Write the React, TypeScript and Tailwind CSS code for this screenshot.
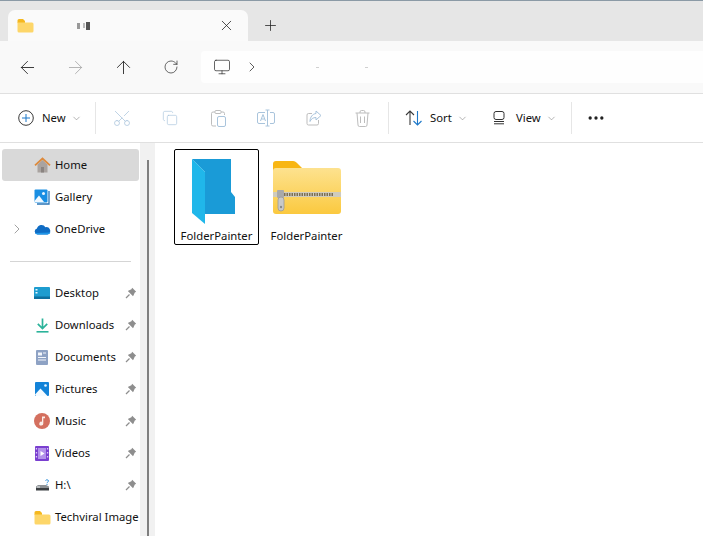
import { ArrowLeft, ArrowRight, ArrowUp, ChevronDown, ChevronRight, Copy, Monitor, MoreHorizontal, Plus, RotateCw, Scissors, X } from 'lucide-react';
import type { ReactNode } from 'react';

function SmallFolder({ size = 17 }: { size?: number }) {
  return (
    <svg width={size} height={size} viewBox="0 0 17 17">
      <path d="M0.5 3.5a1.5 1.5 0 0 1 1.5-1.5h4l2 2v2h-7.500z" fill="#f5b81f" />
      <path d="M0.500 5.500h14.500a1.500 1.500 0 0 1 1.500 1.500v7a1.500 1.500 0 0 1-1.500 1.500h-13a1.500 1.500 0 0 1-1.500-1.500z" fill="#fdd669" />
    </svg>
  );
}

function HomeIcon() {
  return (
    <svg width="17" height="16" viewBox="0 0 17 16">
      <path d="M3.500 7.500 8.500 3l5 4.500V15.500H3.500z" fill="#a9a3a0" />
      <rect x="7" y="10" width="3" height="5.500" fill="#8a8481" />
      <path d="M1 8.300 8.500 1.500 16 8.300" fill="none" stroke="#dd8a3c" strokeWidth="1.800" />
    </svg>
  );
}

function GalleryIcon() {
  return (
    <svg width="16" height="16" viewBox="0 0 16 16">
      <rect x="0.500" y="0.500" width="13" height="13" rx="1" fill="#1a8fe3" />
      <circle cx="9.500" cy="4.500" r="1.500" fill="#e8f5ff" />
      <path d="M0.500 12 5 6.500l5 6.500H0.500z" fill="#f2f9ff" />
      <path d="M15 2v13H3" fill="none" stroke="#2a74b5" strokeWidth="1.300" />
    </svg>
  );
}

function CloudIcon() {
  return (
    <svg width="17" height="12" viewBox="0 0 17 12">
      <path d="M3.500 11.500A3 3 0 0 1 3 5.600 4.500 4.500 0 0 1 11.400 4.300 3.700 3.700 0 0 1 13.500 11.500z" fill="#0f6cc4" />
      <path d="M1 10a3 3 0 0 0 2.500 1.500h10a3.500 3.500 0 0 0 3-2z" fill="#1f96e8" />
    </svg>
  );
}

function DesktopIcon() {
  return (
    <svg width="16" height="12" viewBox="0 0 16 12">
      <rect width="16" height="12" rx="1" fill="#1d9ccf" />
      <rect y="9.500" width="16" height="2.500" fill="#0d6f9e" />
      <rect x="1.500" y="2" width="2" height="1.500" fill="#e8f8ff" />
      <rect x="1.500" y="5" width="2" height="1.500" fill="#e8f8ff" />
    </svg>
  );
}

function DownloadIcon() {
  return (
    <svg width="13" height="15" viewBox="0 0 13 15">
      <path d="M6.500 0.500V10M1.800 5.800 6.500 10.500l4.700-4.700" fill="none" stroke="#2bb39a" strokeWidth="1.700" />
      <rect x="0.500" y="13" width="12" height="1.600" fill="#2bb39a" />
    </svg>
  );
}

function DocumentIcon() {
  return (
    <svg width="12" height="15" viewBox="0 0 12 15">
      <rect width="12" height="15" rx="1" fill="#8ea2c4" />
      <rect x="2" y="2.500" width="4" height="3" fill="#f3f6fb" />
      <rect x="2" y="7" width="8" height="1" fill="#f3f6fb" />
      <rect x="2" y="9.500" width="8" height="1" fill="#f3f6fb" />
      <rect x="7" y="2.500" width="3" height="1" fill="#f3f6fb" />
    </svg>
  );
}

function PicturesIcon() {
  return (
    <svg width="14" height="14" viewBox="0 0 14 14">
      <rect width="14" height="14" rx="1" fill="#1383d8" />
      <circle cx="10.500" cy="3.500" r="1.300" fill="#eaf6ff" />
      <path d="M0 12.500 5.500 6.500 12.500 14H1z" fill="#f5fbff" />
    </svg>
  );
}

function MusicIcon() {
  return (
    <svg width="16" height="16" viewBox="0 0 16 16">
      <circle cx="8" cy="8" r="8" fill="#d4705f" />
      <path d="M8 3.500h3v1.800H9.300V10.500A2 2 0 1 1 8 8.700z" fill="#fbeee9" />
    </svg>
  );
}

function VideosIcon() {
  return (
    <svg width="14" height="15" viewBox="0 0 14 15">
      <rect width="14" height="15" rx="1" fill="#7a3fd0" />
      <rect x="3" y="2" width="8" height="11" fill="#b392ea" />
      <path d="M5.500 5l4 2.500-4 2.500z" fill="#fff" />
      <g fill="#dccbf5">
        <rect x="0.800" y="2" width="1.300" height="1.500" />
        <rect x="0.800" y="6" width="1.300" height="1.500" />
        <rect x="0.800" y="10" width="1.300" height="1.500" />
        <rect x="11.900" y="2" width="1.300" height="1.500" />
        <rect x="11.900" y="6" width="1.300" height="1.500" />
        <rect x="11.900" y="10" width="1.300" height="1.500" />
      </g>
    </svg>
  );
}

function DriveIcon() {
  return (
    <svg width="15" height="12" viewBox="0 0 15 12">
      <path d="M1 7.500 3 6h8l3 1.500v3H1z" fill="#8d9296" />
      <rect x="1" y="9" width="13" height="2.500" fill="#3b3f42" />
      <rect x="2" y="7.500" width="3" height="1" fill="#e8e8e8" />
      <path d="M10.500 1.500c.5-1 3-1 3 .5 0 1-1.500 1-1.500 2.200" fill="none" stroke="#2f8fd8" strokeWidth="1" />
      <rect x="11.500" y="5" width="1" height="1" fill="#2f8fd8" />
    </svg>
  );
}

function PinIcon() {
  return (
    <svg width="12" height="12" viewBox="0 0 12 12">
      <path d="M7.200 0.800 11.200 4.800 9.800 5.600 8.600 8.200 8 9.200 2.800 4 3.800 3.400 6.400 2.200z" fill="#8e8e8e" />
      <path d="M4.500 7.500 1 11" stroke="#8e8e8e" strokeWidth="1.200" />
    </svg>
  );
}

function BlueFolder() {
  return (
    <svg width="48" height="68" viewBox="0 0 48 68">
      <path d="M2 1h39v33l4 5v17H15V14z" fill="#1a9bd7" />
      <path d="M2 1l13 13v52L2 55z" fill="#20b7ea" />
    </svg>
  );
}

function ZipFolder() {
  return (
    <svg width="70" height="56" viewBox="0 0 70 56">
      <defs>
        <linearGradient id="zipBody" x1="0" y1="0" x2="0" y2="1">
          <stop offset="0" stopColor="#fde28f" />
          <stop offset="1" stopColor="#fbc93f" />
        </linearGradient>
      </defs>
      <path d="M1 4a3 3 0 0 1 3-3h17c2 0 3 1 4.500 2.500L30 8v6H1z" fill="#f8b613" />
      <rect x="1" y="8" width="68" height="46" rx="3" fill="url(#zipBody)" />
      <rect x="1" y="32" width="68" height="5" fill="#cfcbbd" />
      <path d="M12 34.500h50" stroke="#7d6f52" strokeWidth="3" strokeDasharray="1.500 1" />
      <rect x="5" y="30" width="7" height="8" rx="1" fill="#a9a9a9" />
      <rect x="6" y="37" width="6" height="14" rx="3" fill="#c9c9c9" stroke="#9a9a9a" strokeWidth="0.800" />
      <circle cx="9" cy="47" r="1.200" fill="#8a8a8a" />
    </svg>
  );
}

function NavButton({ children }: { children: ReactNode }) {
  return <div className="flex h-8 w-12 items-center justify-center">{children}</div>;
}

function ToolIcon({ children }: { children: ReactNode }) {
  return <div className="flex h-8 w-12 items-center justify-center text-[#a9c4dc]">{children}</div>;
}

function Divider() {
  return <div className="h-[32px] w-px bg-[#e6e6e6]" />;
}

function RenameIcon() {
  return (
    <svg width="18" height="18" viewBox="0 0 18 18" fill="none" stroke="#a9c4dc" strokeWidth="1">
      <path d="M8 3.500H2a1.500 1.500 0 0 0-1.500 1.500v8A1.500 1.500 0 0 0 2 14.500h6M13 3.500h3A1.500 1.500 0 0 1 17.500 5v8a1.500 1.500 0 0 1-1.500 1.500h-3" />
      <path d="M10.500 1v16M8.500 1h4M8.500 17h4" />
      <path d="M3.500 12l2.500-6.500L8.500 12M4.500 10h3" />
    </svg>
  );
}

function PasteIcon() {
  return (
    <svg width="15" height="17" viewBox="0 0 15 17" fill="none" strokeWidth="1">
      <path d="M4 2H2A1.500 1.500 0 0 0 0.500 3.500v11A1.500 1.500 0 0 0 2 16h3M10 2h2a1.500 1.500 0 0 1 1.500 1.500V5" stroke="#bdbdbd" />
      <rect x="4" y="0.500" width="6" height="3" rx="1" stroke="#bdbdbd" />
      <rect x="6.500" y="6.500" width="8" height="10" rx="1.500" stroke="#a9c4dc" />
    </svg>
  );
}

function ShareIcon() {
  return (
    <svg width="16" height="16" viewBox="0 0 16 16" fill="none" stroke="#a9c4dc" strokeWidth="1">
      <path d="M12.500 10v3.500A1.500 1.500 0 0 1 11 15H2.500A1.500 1.500 0 0 1 1 13.500V5A1.500 1.500 0 0 1 2.500 3.500H6" stroke="#bdbdbd" />
      <path d="M10 1l5 4.500L10 10V7.500C7 7.500 5 9 4 11.500 4 7 6.500 4 10 3.500z" />
    </svg>
  );
}

function TrashIcon() {
  return (
    <svg width="15" height="17" viewBox="0 0 15 17" fill="none" stroke="#bdbdbd" strokeWidth="1">
      <path d="M0.500 3h14M5 3V2a1.500 1.500 0 0 1 1.500-1.500h2A1.500 1.500 0 0 1 10 2v1" />
      <path d="M2 3l1 12a1.500 1.500 0 0 0 1.500 1.500h6A1.500 1.500 0 0 0 12 15l1-12" />
      <path d="M5.500 6.500v6.500M9.500 6.500v6.500" />
    </svg>
  );
}

function SortIcon() {
  return (
    <svg width="18" height="16" viewBox="0 0 18 16" fill="none" strokeWidth="1.100">
      <path d="M5 15V1M1 5l4-4 4 4" stroke="#3a3a3a" />
      <path d="M12.500 1v14M8.500 11l4 4 4-4" stroke="#1d78c9" />
    </svg>
  );
}

function ViewIcon() {
  return (
    <svg width="12" height="14" viewBox="0 0 12 14" fill="none" stroke="#333" strokeWidth="1">
      <rect x="1" y="0.500" width="10" height="8" rx="2" />
      <path d="M1 10.500h10M1 12.800h10" />
    </svg>
  );
}

const mainItems = [
  { label: 'Home', icon: <HomeIcon />, active: true },
  { label: 'Gallery', icon: <GalleryIcon /> },
  { label: 'OneDrive', icon: <CloudIcon />, expand: true },
];

const quickItems = [
  { label: 'Desktop', icon: <DesktopIcon />, pin: true },
  { label: 'Downloads', icon: <DownloadIcon />, pin: true },
  { label: 'Documents', icon: <DocumentIcon />, pin: true },
  { label: 'Pictures', icon: <PicturesIcon />, pin: true },
  { label: 'Music', icon: <MusicIcon />, pin: true },
  { label: 'Videos', icon: <VideosIcon />, pin: true },
  { label: 'H:\\', icon: <DriveIcon />, pin: true },
  { label: 'Techviral Image', icon: <SmallFolder /> },
];

type NavItem = {
  label: string;
  icon: ReactNode;
  active?: boolean;
  expand?: boolean;
  pin?: boolean;
};

function SidebarRow({ item }: { item: NavItem }) {
  return (
    <div className={`ml-[2px] flex h-8 w-[137px] shrink-0 items-center overflow-hidden rounded-[3px] ${item.active ? 'bg-[#d9d9d9]' : ''}`}>
      <div className="flex w-[30px] shrink-0 items-center justify-center text-[#8a8a8a]">
        {item.expand && <ChevronRight size={16} strokeWidth={1.2} />}
      </div>
      <div className="flex w-[20px] shrink-0 items-center justify-center">{item.icon}</div>
      <span className="ml-[3px] whitespace-nowrap text-[11.3px] text-[#111]">{item.label}</span>
      {item.pin && (
        <div className="ml-auto mr-[2px] flex w-[12px] shrink-0 items-center justify-center">
          <PinIcon />
        </div>
      )}
    </div>
  );
}

export default function App() {
  return (
    <div className="flex h-[536px] w-[703px] flex-col overflow-hidden bg-white font-['Noto_Sans',sans-serif]">
      <div className="flex h-[41px] shrink-0 items-end border-t border-[#8b9aa6] bg-[#e6e6e6] pl-[8px]">
        <div className="flex h-[31px] w-[240px] items-center rounded-t-[7px] bg-[#fafafa] pl-[9px] pr-[13px]">
          <SmallFolder />
          <span className="ml-[43px] h-[6px] w-[3px] bg-[#999]" />
          <span className="ml-[3px] h-[5px] w-[2px] bg-[#bbb]" />
          <span className="ml-[1px] h-[8px] w-[4px] bg-[#555]" />
          <X size={17} strokeWidth={1.1} className="ml-auto text-[#222]" />
        </div>
        <div className="mb-[7px] ml-[14px] flex h-[17px] w-[17px] items-center justify-center">
          <Plus size={17} strokeWidth={1.1} className="text-[#222]" />
        </div>
      </div>
      <div className="flex h-[53px] shrink-0 items-center border-b border-[#e0e0e0] bg-[#f9f9f9] pl-[3px]">
        <NavButton><ArrowLeft size={21} strokeWidth={1} className="text-[#222]" /></NavButton>
        <NavButton><ArrowRight size={21} strokeWidth={1} className="text-[#aaa]" /></NavButton>
        <NavButton><ArrowUp size={21} strokeWidth={1} className="text-[#222]" /></NavButton>
        <NavButton><RotateCw size={16} strokeWidth={1.1} className="text-[#333]" /></NavButton>
        <div className="ml-[6px] flex h-[32px] flex-1 items-center rounded-l-[4px] bg-[#fefefe] pl-[12px]">
          <Monitor size={18} strokeWidth={1} className="text-[#333]" />
          <ChevronRight size={16} strokeWidth={1.2} className="ml-[13px] text-[#333]" />
          <span className="ml-[56px] h-px w-[3px] bg-[#d0d0d0]" />
          <span className="ml-[46px] h-px w-[3px] bg-[#d0d0d0]" />
        </div>
      </div>
      <div className="flex h-[49px] shrink-0 items-center border-b border-[#e0e0e0] bg-white">
        <div className="flex w-[95px] items-center pl-[18px]">
          <svg width="16" height="16" viewBox="0 0 16 16" fill="none">
            <circle cx="8" cy="8" r="7.300" stroke="#3a3a3a" strokeWidth="1" />
            <path d="M8 4v8M4 8h8" stroke="#1d78c9" strokeWidth="1" />
          </svg>
          <span className="ml-[8px] text-[11.3px] text-[#111]">New</span>
          <ChevronDown size={11} strokeWidth={1.2} className="ml-[5px] text-[#777]" />
        </div>
        <Divider />
        <div className="ml-[2px] flex">
          <ToolIcon><Scissors size={20} strokeWidth={0.9} className="-rotate-90" /></ToolIcon>
          <ToolIcon><Copy size={16} strokeWidth={1} /></ToolIcon>
          <ToolIcon><PasteIcon /></ToolIcon>
          <ToolIcon><RenameIcon /></ToolIcon>
          <ToolIcon><ShareIcon /></ToolIcon>
          <ToolIcon><TrashIcon /></ToolIcon>
        </div>
        <div className="ml-[2px]"><Divider /></div>
        <div className="flex w-[87px] items-center pl-[16px]">
          <SortIcon />
          <span className="ml-[7px] text-[11.3px] text-[#111]">Sort</span>
          <ChevronDown size={11} strokeWidth={1.2} className="ml-[5px] text-[#777]" />
        </div>
        <div className="flex w-[95px] items-center pl-[17px]">
          <ViewIcon />
          <span className="ml-[11px] text-[11.3px] text-[#111]">View</span>
          <ChevronDown size={11} strokeWidth={1.2} className="ml-[5px] text-[#777]" />
        </div>
        <Divider />
        <MoreHorizontal size={20} strokeWidth={2} className="ml-[14px] text-[#222]" />
      </div>
      <div className="flex min-h-0 flex-1">
        <div className="flex w-[140px] shrink-0 flex-col overflow-hidden bg-white pt-[6px]">
          {mainItems.map((item) => (
            <SidebarRow key={item.label} item={item} />
          ))}
          <div className="flex h-8 shrink-0 items-center pl-[10px]">
            <div className="h-px w-[121px] bg-[#d5d5d5]" />
          </div>
          {quickItems.map((item) => (
            <SidebarRow key={item.label} item={item} />
          ))}
        </div>
        <div className="w-[15px] shrink-0 bg-[#f1f1f1] pl-[7px] pt-[17px]">
          <div className="h-full w-[2px] bg-[#7f7f7f]" />
        </div>
        <div className="flex flex-1 items-start gap-[5px] pl-[19px] pt-[6px]">
          <div className="flex h-[96px] w-[85px] flex-col items-center rounded-[2px] border border-black">
            <div className="mr-[6px] h-[79px] pt-[8px]"><BlueFolder /></div>
            <span className="text-[11.3px] leading-[14px] text-[#111]">FolderPainter</span>
          </div>
          <div className="flex h-[96px] w-[85px] flex-col items-center rounded-[2px] border border-transparent">
            <div className="h-[79px] pt-[10px]"><ZipFolder /></div>
            <span className="text-[11.3px] leading-[14px] text-[#111]">FolderPainter</span>
          </div>
        </div>
      </div>
    </div>
  );
}
